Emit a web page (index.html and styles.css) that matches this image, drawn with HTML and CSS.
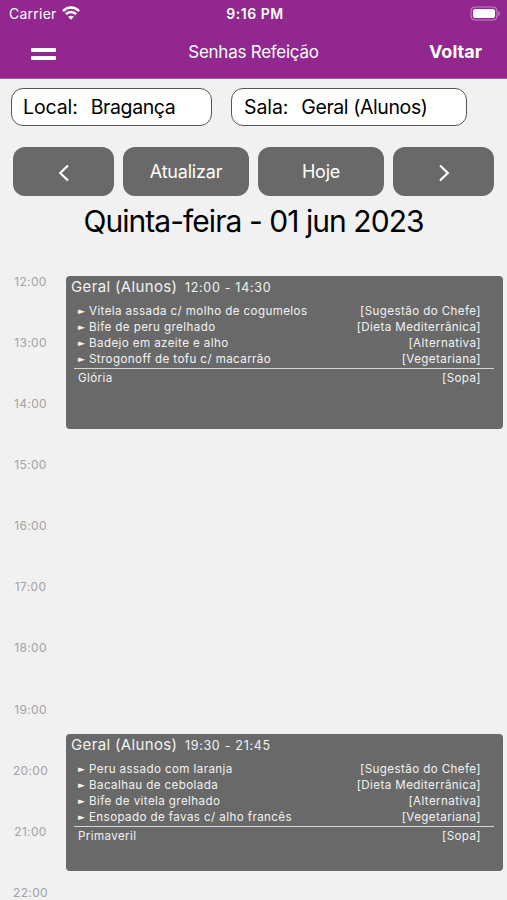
FILE: index.html
```html
<!DOCTYPE html>
<html lang="pt">
<head>
  <meta charset="UTF-8">
  <meta name="viewport" content="width=device-width, initial-scale=1.0">
  <title>Senhas Refeição</title>
  <link rel="stylesheet" href="styles.css">
</head>
<body>
  <header class="header">
    <div class="status-bar">
      <div class="carrier">
        <span class="carrier-name">Carrier</span>
        <svg class="wifi" width="18" height="14" viewBox="0 0 18 14" fill="none" stroke="#fff" stroke-width="2.5">
          <path d="M1 5.1C5.5.4 12.5.4 17 5.1"/>
          <path d="M3.9 8.2c2.9-2.9 7.3-2.9 10.2 0"/>
          <path d="M9 13.8l-2.9-3c1.6-1.5 4.2-1.5 5.8 0z" fill="#fff" stroke="none"/>
        </svg>
      </div>
      <span class="clock">9:16 PM</span>
      <svg class="battery" width="31" height="15" viewBox="0 0 31 15">
        <rect x="1" y="1" width="26" height="13" rx="4" fill="none" stroke="#c88bc4"/>
        <rect x="3" y="3" width="22" height="9" rx="2" fill="#fff"/>
        <path d="M28.3 5.2c1.9.7 1.9 3.9 0 4.6z" fill="#c88bc4"/>
      </svg>
    </div>
    <nav class="nav">
      <button class="menu-btn" aria-label="Menu"><span></span><span></span></button>
      <h1 class="nav-title">Senhas Refeição</h1>
      <a class="back" href="#">Voltar</a>
    </nav>
  </header>

  <main>
    <div class="filters">
      <div class="filter filter-local"><span class="filter-label">Local:</span><span class="filter-value">Bragança</span></div>
      <div class="filter filter-room"><span class="filter-label">Sala:</span><span class="filter-value">Geral (Alunos)</span></div>
    </div>

    <div class="buttons">
      <button class="button" aria-label="Anterior">
        <svg class="arrow" width="12" height="18" viewBox="0 0 12 18" fill="none" stroke="#fff" stroke-width="2.2"><path d="M10 1.5L2.2 9l7.8 7.5"/></svg>
      </button>
      <button class="button">Atualizar</button>
      <button class="button">Hoje</button>
      <button class="button" aria-label="Seguinte">
        <svg class="arrow" width="12" height="18" viewBox="0 0 12 18" fill="none" stroke="#fff" stroke-width="2.2"><path d="M2 1.5L9.8 9 2 16.5"/></svg>
      </button>
    </div>

    <h2 class="date">Quinta-feira - 01 jun 2023</h2>

    <div class="schedule">
      <div class="hours">
        <span>12:00</span>
        <span>13:00</span>
        <span>14:00</span>
        <span>15:00</span>
        <span>16:00</span>
        <span>17:00</span>
        <span>18:00</span>
        <span>19:00</span>
        <span>20:00</span>
        <span>21:00</span>
        <span>22:00</span>
      </div>

      <section class="event lunch">
        <h3 class="event-title">Geral (Alunos) <span class="event-time">12:00 - 14:30</span></h3>
        <ul class="menu">
          <li><span class="dish">Vitela assada c/ molho de cogumelos</span><span>[Sugestão do Chefe]</span></li>
          <li><span class="dish">Bife de peru grelhado</span><span>[Dieta Mediterrânica]</span></li>
          <li><span class="dish">Badejo em azeite e alho</span><span>[Alternativa]</span></li>
          <li><span class="dish">Strogonoff de tofu c/ macarrão</span><span>[Vegetariana]</span></li>
        </ul>
        <div class="soup"><span>Glória</span><span>[Sopa]</span></div>
      </section>

      <section class="event dinner">
        <h3 class="event-title">Geral (Alunos) <span class="event-time">19:30 - 21:45</span></h3>
        <ul class="menu">
          <li><span class="dish">Peru assado com laranja</span><span>[Sugestão do Chefe]</span></li>
          <li><span class="dish">Bacalhau de cebolada</span><span>[Dieta Mediterrânica]</span></li>
          <li><span class="dish">Bife de vitela grelhado</span><span>[Alternativa]</span></li>
          <li><span class="dish">Ensopado de favas c/ alho francês</span><span>[Vegetariana]</span></li>
        </ul>
        <div class="soup"><span>Primaveril</span><span>[Sopa]</span></div>
      </section>
    </div>
  </main>
</body>
</html>
```
FILE: styles.css
```css
* {
  box-sizing: border-box;
}

body {
  font-family: Inter, Roboto, sans-serif;
  background-color: #f1f1f1;
  color: #000;
  margin: 0;
  height: 900px;
  overflow: hidden;
}

h1, h2, h3, ul {
  margin: 0;
  padding: 0;
  font-weight: 400;
}

button {
  font-family: inherit;
  border: 0;
}

.header {
  height: 79px;
  background-color: #92278f;
  border-bottom: 1px solid #a95ba7;
  color: #fff;
}

.status-bar {
  display: grid;
  grid-template-columns: 1fr auto 1fr;
  align-items: center;
  height: 27px;
  padding: 0 6px 0 9px;
}

.carrier {
  display: flex;
  align-items: center;
  gap: 5px;
}

.carrier-name {
  font-size: 14px;
  letter-spacing: 0.25px;
}

.wifi {
  margin-top: -1px;
}

.clock {
  font-size: 14px;
  font-weight: 600;
  letter-spacing: 0.55px;
}

.battery {
  justify-self: end;
  margin-top: -1px;
}

.nav {
  display: grid;
  grid-template-columns: 1fr auto 1fr;
  align-items: center;
  height: 50px;
  padding: 0 25px;
}

.menu-btn {
  display: flex;
  flex-direction: column;
  gap: 4px;
  width: 25px;
  padding: 0;
  margin: 3px 0 0 6px;
  background: none;
}

.menu-btn span {
  height: 4px;
  border-radius: 1px;
  background-color: #fff;
}

.nav-title {
  font-size: 17px;
  letter-spacing: -0.25px;
}

.back {
  justify-self: end;
  margin-top: -1px;
  color: #fff;
  font-size: 18px;
  font-weight: 700;
  text-decoration: none;
}

.filters {
  display: flex;
  gap: 19px;
  padding: 9px 11px 0;
}

.filter {
  display: flex;
  align-items: center;
  gap: 13px;
  height: 38px;
  padding: 0 12px 0 11px;
  border: 1px solid #555;
  border-radius: 12px;
  background-color: #fff;
  font-size: 19.5px;
}

.filter-label {
  letter-spacing: -0.1px;
}

.filter-value {
  letter-spacing: -0.4px;
}

.filter-local {
  width: 201px;
}

.filter-room {
  width: 236px;
  padding-left: 12px;
}

.buttons {
  display: grid;
  grid-template-columns: 101px 126px 126px 101px;
  gap: 9px;
  padding: 21px 13px 0;
}

.button {
  display: flex;
  align-items: center;
  justify-content: center;
  height: 49px;
  padding: 0;
  border-radius: 12px;
  background-color: #696969;
  color: #fff;
  font-size: 18px;
  letter-spacing: -0.2px;
}

.arrow {
  margin-top: 2px;
}

.date {
  height: 79px;
  padding-top: 6px;
  font-size: 30px;
  letter-spacing: -0.95px;
  line-height: 38px;
  text-align: center;
}

/* one row for each quarter of an hour */
.schedule {
  display: grid;
  grid-template-columns: 62px 1fr;
  grid-template-rows: repeat(40, 15.27px);
  column-gap: 4px;
  height: 625px;
  padding: 1px 4px 0 0;
}

.hours {
  grid-row: 1 / -1;
  display: grid;
  grid-template-rows: repeat(10, 61.08px) 13px;
  height: 624px;
  border-right: 1px solid #eee;
  color: #a3a3a3;
  font-size: 12px;
  letter-spacing: 0.35px;
  line-height: 11px;
  text-align: center;
}

.event {
  grid-column: 2;
  border-radius: 4px;
  background-color: #696969;
  color: #f2f2f2;
  font-size: 11.6px;
  letter-spacing: 0.4px;
}

.lunch {
  grid-row: 1 / span 10;
}

.dinner {
  grid-row: 31 / span 9;
}

.event-title {
  padding-left: 5px;
  font-size: 15px;
  letter-spacing: 0.35px;
  line-height: 21px;
}

.event-time {
  margin-left: 3px;
  font-size: 12.5px;
  letter-spacing: 0.7px;
}

.menu {
  margin: 5px 9px 0 8px;
  padding: 0 13px 1px 4px;
  border-bottom: 1px solid #d5d5d5;
  list-style: none;
}

.menu li,
.soup {
  display: flex;
  justify-content: space-between;
  height: 16px;
  line-height: 16px;
}

.dish::before {
  content: "►";
  display: inline-block;
  width: 11px;
  font-family: "DejaVu Sans", sans-serif;
  font-size: 9px;
  letter-spacing: 0;
  line-height: 1;
  vertical-align: 1px;
}

.soup {
  margin-top: 1px;
  padding: 0 22px 0 12px;
}
```
